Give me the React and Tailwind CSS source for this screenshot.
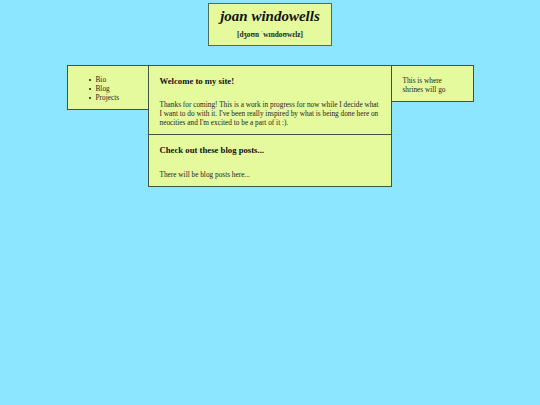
export default function App() {
  return (
    <div className="min-h-[405px] bg-[#8de6ff] font-['Liberation_Serif',serif] text-[7.3px] leading-[9px] text-[#1e1e1e]">
      <div className="flex justify-center pt-[3px]">
        <div className="w-[124px] h-[43px] border border-[#4d6b55] bg-[#e4fa9d] flex flex-col items-center">
          <h1 className="mt-[3px] text-[15px] leading-[18px] font-bold italic text-[#111]">joan windowells</h1>
          <p className="mt-[5px] font-bold text-[7.3px]">[dʒoʊn ˈwɪndoʊwɛlz]</p>
        </div>
      </div>

      <div className="flex justify-center items-start mt-[19px]">
        <nav className="w-[82px] h-[45px] border border-[#3e5544] bg-[#e4fa9d] pt-[9px] pl-[21px]">
          <ul>
            {["Bio", "Blog", "Projects"].map((item) => (
              <li key={item} className="flex items-center">
                <span className="w-[2px] h-[2px] rounded-full bg-[#1e1e1e] mr-[5px]"></span>
                {item}
              </li>
            ))}
          </ul>
        </nav>

        <main className="w-[244px] -ml-px">
          <section className="h-[70px] border border-[#3e5544] bg-[#e4fa9d] px-[11px] pt-[10px]">
            <h2 className="text-[8.7px] leading-[10px] font-bold text-[#111]">Welcome to my site!</h2>
            <p className="mt-[14px]">
              Thanks for coming! This is a work in progress for now while I decide what I want to do with it. I've been really inspired by what is being done here on neocities and I'm excited to be a part of it :).
            </p>
          </section>
          <section className="h-[53px] -mt-px border border-[#3e5544] bg-[#e4fa9d] px-[11px] pt-[10px]">
            <h2 className="text-[8.7px] leading-[10px] font-bold text-[#111]">Check out these blog posts...</h2>
            <p className="mt-[15px]">There will be blog posts here...</p>
          </section>
        </main>

        <aside className="w-[83px] h-[37px] -ml-px border border-[#3e5544] bg-[#e4fa9d] pl-[11px] pt-[10px]">
          <p>This is where<br />shrines will go</p>
        </aside>
      </div>
    </div>
  );
}
